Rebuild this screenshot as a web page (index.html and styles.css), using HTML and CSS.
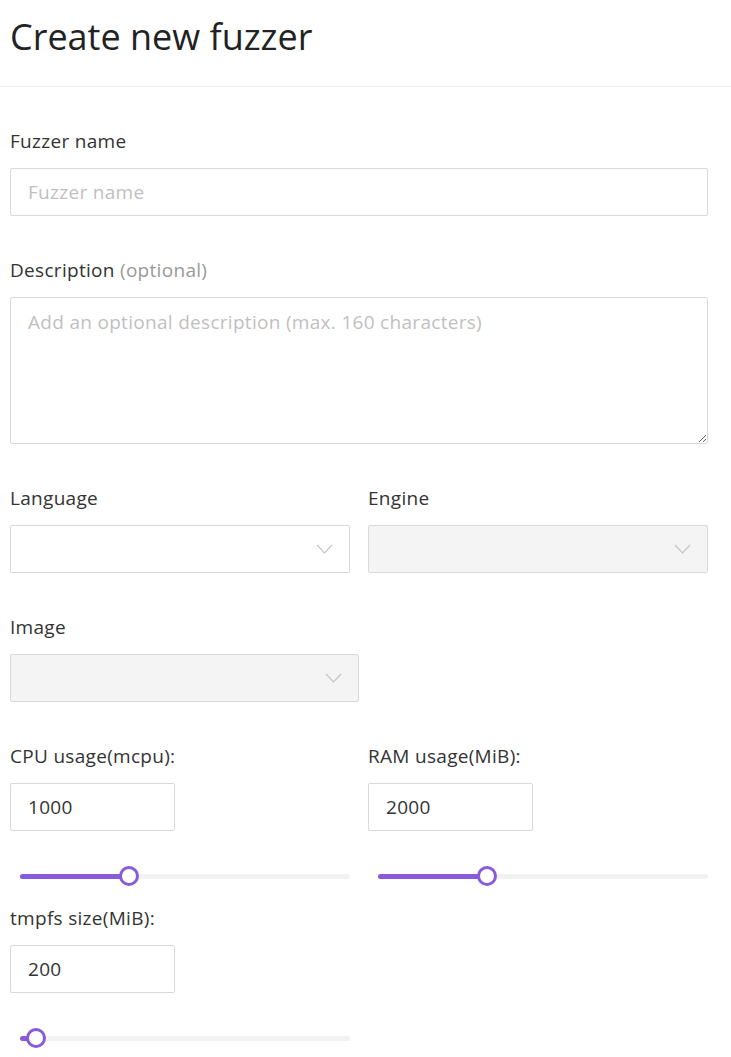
FILE: index.html
```html
<!DOCTYPE html>
<html>
<head>
<meta charset="utf-8">
<link rel="stylesheet" href="styles.css">
</head>
<body>
<header class="page-header">
  <h1 class="title">Create new fuzzer</h1>
</header>
<form class="form">
  <div class="field">
    <label class="label">Fuzzer name</label>
    <input class="input" type="text" placeholder="Fuzzer name">
  </div>
  <div class="field">
    <label class="label">Description <span class="optional">(optional)</span></label>
    <textarea class="textarea" placeholder="Add an optional description (max. 160 characters)"></textarea>
  </div>
  <div class="row two">
    <div class="field">
      <label class="label">Language</label>
      <div class="select">
        <svg class="chevron" width="17" height="10" viewBox="0 0 17 10"><path d="M1 1 L8.5 9 L16 1" fill="none" stroke="#c4c4c4" stroke-width="1.1"/></svg>
      </div>
    </div>
    <div class="field">
      <label class="label">Engine</label>
      <div class="select disabled">
        <svg class="chevron" width="17" height="10" viewBox="0 0 17 10"><path d="M1 1 L8.5 9 L16 1" fill="none" stroke="#c4c4c4" stroke-width="1.1"/></svg>
      </div>
    </div>
  </div>
  <div class="field image-field">
    <label class="label">Image</label>
    <div class="select disabled">
      <svg class="chevron" width="17" height="10" viewBox="0 0 17 10"><path d="M1 1 L8.5 9 L16 1" fill="none" stroke="#c4c4c4" stroke-width="1.1"/></svg>
    </div>
  </div>
  <div class="row two slider-row">
    <div class="field">
      <label class="label">CPU usage(mcpu):</label>
      <input class="input num" type="text" value="1000">
      <div class="slider"><div class="track"><div class="fill" style="width:33%"></div><div class="thumb" style="left:33%"></div></div></div>
    </div>
    <div class="field">
      <label class="label">RAM usage(MiB):</label>
      <input class="input num" type="text" value="2000">
      <div class="slider"><div class="track"><div class="fill" style="width:33%"></div><div class="thumb" style="left:33%"></div></div></div>
    </div>
  </div>
  <div class="row two slider-row">
    <div class="field">
      <label class="label">tmpfs size(MiB):</label>
      <input class="input num" type="text" value="200">
      <div class="slider"><div class="track"><div class="fill" style="width:4.9%"></div><div class="thumb" style="left:4.9%"></div></div></div>
    </div>
  </div>
</form>
</body>
</html>
```

FILE: styles.css
```css
* { box-sizing: border-box; }
html, body { margin: 0; padding: 0; background: #fff; }
body {
  font-family: "Open Sans", "Noto Sans", sans-serif;
  color: #333;
  width: 731px;
  overflow: hidden;
}
.page-header {
  border-bottom: 1px solid #ececec;
  padding: 12px 10px 0;
  height: 87px;
}
.title {
  margin: 0;
  font-size: 36px;
  font-weight: 400;
  color: #222;
  line-height: 50px;
  letter-spacing: 0;
}
.form {
  padding: 42px 23px 0 10px;
  display: flex;
  flex-direction: column;
}
.form > * { margin-bottom: 42px; }
.form > .slider-row { margin-bottom: 20px; }
.field {
  display: flex;
  flex-direction: column;
  min-width: 0;
}
.label {
  font-size: 19px;
  letter-spacing: 0.3px;
  line-height: 24px;
  color: #333;
  margin-bottom: 15px;
}
.optional { color: #999; }
.input, .textarea, .select {
  border: 1px solid #d9d9d9;
  border-radius: 2px;
  font-family: inherit;
  font-size: 19px;
  letter-spacing: 0.3px;
  color: #333;
  background: #fff;
  outline: none;
}
.input {
  height: 48px;
  padding: 0 17px;
  width: 100%;
}
.input::placeholder, .textarea::placeholder { color: #bfbfbf; }
.textarea {
  height: 147px;
  padding: 11px 17px;
  line-height: 26px;
  resize: vertical;
  display: block;
  width: 100%;
}
.row.two {
  display: grid;
  grid-template-columns: 340px 340px;
  column-gap: 18px;
}
.select {
  height: 48px;
  position: relative;
}
.select.disabled { background: #f4f4f4; }
.chevron {
  position: absolute;
  right: 16px;
  top: 18px;
}
.image-field .select { width: 349px; }
.input.num { width: 165px; }
.slider {
  padding: 0 0 0 10px;
  height: 20px;
  display: flex;
  align-items: center;
  margin-top: 35px;
}
.track {
  position: relative;
  height: 5px;
  width: 100%;
  border-radius: 3px;
  background: #f2f2f2;
}
.fill {
  position: absolute;
  left: 0; top: 0; bottom: 0;
  background: #875bdc;
  border-radius: 3px;
}
.thumb {
  position: absolute;
  top: 50%;
  width: 20px;
  height: 20px;
  margin: -10px 0 0 -10px;
  border: 3px solid #875bdc;
  border-radius: 50%;
  background: #fff;
}
```
